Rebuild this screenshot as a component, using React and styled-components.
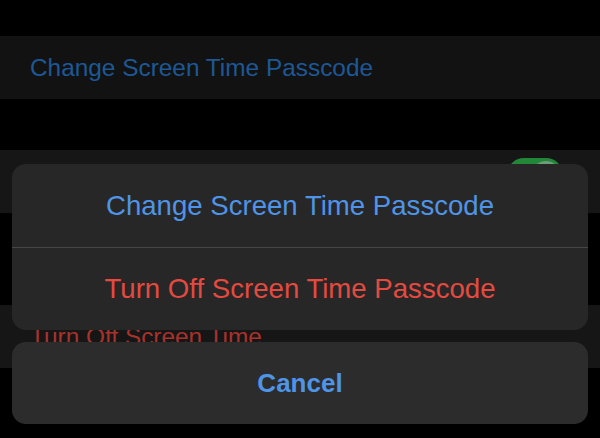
import React from "react";
import styled, { createGlobalStyle } from "styled-components";

const GlobalStyle = createGlobalStyle`
  html, body {
    margin: 0;
    padding: 0;
    background: #000;
    overflow: hidden;
  }
  * {
    box-sizing: border-box;
  }
`;

const Screen = styled.div`
  position: relative;
  width: 600px;
  height: 438px;
  background: #000;
  font-family: "Liberation Sans", Arial, sans-serif;
  overflow: hidden;
`;

const List = styled.div`
  display: flex;
  flex-direction: column;
  padding-top: 36px;
`;

const Group = styled.div`
  margin-bottom: ${(p) => p.$gap || 0}px;
`;

const Row = styled.div`
  position: relative;
  height: 63px;
  display: flex;
  align-items: center;
  padding-left: 30px;
  background: ${(p) => p.$bg || "#131313"};
  font-size: 24.4px;
  color: ${(p) => p.$color};
`;

const Toggle = styled.div`
  position: absolute;
  right: 37px;
  top: 8px;
  width: 56px;
  height: 34px;
  border-radius: 17px;
  background: #23873a;

  &::after {
    content: "";
    position: absolute;
    right: 3px;
    top: 3px;
    width: 28px;
    height: 28px;
    border-radius: 50%;
    background: #6f9c78;
  }
`;

const Overlay = styled.div`
  position: absolute;
  inset: 0;
  display: flex;
  flex-direction: column;
  justify-content: flex-end;
  gap: 12px;
  padding: 0 12px 14px;
`;

const Sheet = styled.div`
  display: flex;
  flex-direction: column;
  border-radius: 14px;
  overflow: hidden;
  background: #272727;
`;

const Separator = styled.div`
  height: 1px;
  background: #464646;
`;

const Action = styled.div`
  height: ${(p) => p.$h || 83}px;
  display: flex;
  align-items: center;
  justify-content: center;
  font-size: 27.6px;
  font-weight: ${(p) => (p.$bold ? 700 : 400)};
  color: ${(p) => p.$color};
`;

const CancelButton = styled(Action)`
  height: 82px;
  border-radius: 14px;
  background: #2c2c2c;
  font-size: 26px;
  font-weight: 700;
`;

export default function App() {
  return (
    <Screen>
      <GlobalStyle />
      <List>
        <Group $gap={51}>
          <Row $color="#1d5896" $bg="#121212">
            Change Screen Time Passcode
          </Row>
        </Group>
        <Group $gap={92}>
          <Row $bg="#161616">
            <Toggle />
          </Row>
        </Group>
        <Group>
          <Row $color="#a8322c" $bg="#161616">
            Turn Off Screen Time
          </Row>
        </Group>
      </List>

      <Overlay>
        <Sheet>
          <Action $color="#4f94e6">Change Screen Time Passcode</Action>
          <Separator />
          <Action $h={82} $color="#e44a40">
            Turn Off Screen Time Passcode
          </Action>
        </Sheet>
        <CancelButton $color="#4f94e6">Cancel</CancelButton>
      </Overlay>
    </Screen>
  );
}
